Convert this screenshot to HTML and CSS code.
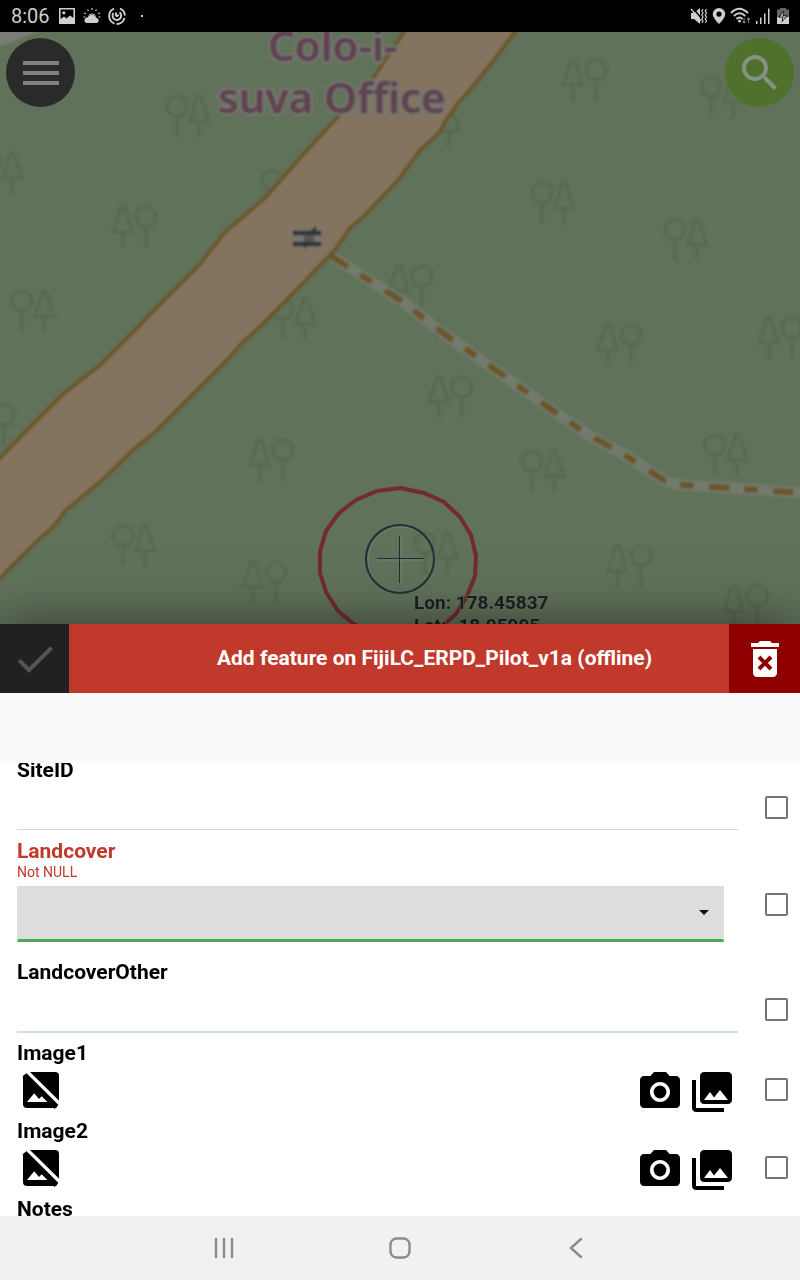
FILE: index.html
```html
<!DOCTYPE html>
<html lang="en">
<head>
<meta charset="utf-8">
<meta name="viewport" content="width=device-width, initial-scale=1">
<title>Add feature</title>
<link rel="stylesheet" href="styles.css">
</head>
<body>
<svg class="defs" aria-hidden="true">
  <symbol id="camera" viewBox="0 0 24 24">
    <circle cx="12" cy="12" r="3.2"/>
    <path d="M9 2L7.170 4H4c-1.100 0-2 .9-2 2v12c0 1.100.9 2 2 2h16c1.100 0 2-.9 2-2V6c0-1.100-.9-2-2-2h-3.170L15 2H9zm3 15c-2.760 0-5-2.240-5-5s2.240-5 5-5 5 2.240 5 5-2.240 5-5 5z"/>
  </symbol>
  <symbol id="library" viewBox="0 0 24 24">
    <path d="M22 16V4c0-1.100-.9-2-2-2H8c-1.100 0-2 .9-2 2v12c0 1.100.9 2 2 2h12c1.100 0 2-.9 2-2zm-11-4l2.030 2.710L16 11l4 5H8l3-4zM2 6v14c0 1.100.9 2 2 2h14v-2H4V6H2z"/>
  </symbol>
  <symbol id="no-image" viewBox="0 1 24 24">
    <path d="M5.500 3H19a2 2 0 0 1 2 2V19L19.500 21H5a2 2 0 0 1-2-2V5Z"/>
    <path fill="#fff" d="M5 18L8.600 13.600 11 16.500 12.600 14.900 15.500 18Z"/>
    <path stroke="#000" stroke-width="1.800" d="M3.400 4.900L19.400 20.900"/>
    <path stroke="#fff" stroke-width="1.700" d="M4.500 2.200L22.500 20"/>
  </symbol>
  <g id="tree-a" fill="none">
    <path d="M-13-19Q-11-22-9-19L-2 5H-21ZM-11 5V21"/>
    <circle cx="12" cy="-10" r="10"/><path d="M12 0V21"/>
  </g>
  <g id="tree-b" fill="none">
    <path d="M9-19Q11-22 13-19L21 5H2ZM11 5V21"/>
    <circle cx="-11" cy="-10" r="10"/><path d="M-11 0V21"/>
  </g>
</svg>
<div class="app">
  <header class="status">
    <time class="clock">8:06</time>
    <svg class="s-icon" viewBox="0 0 18 18" aria-hidden="true"><path fill-rule="evenodd" d="M1 1H17V17H1ZM2.600 2.600V12L6 9.500 8.500 11.500 12 8.500 15.400 11V2.600Z"/><circle cx="5.800" cy="5.800" r="1.600"/></svg>
    <svg class="s-icon" viewBox="0 0 18 18" aria-hidden="true"><path d="M4 16a2.700 2.700 0 0 1 .3-5.400A5 5 0 0 1 13.500 11 2.600 2.600 0 0 1 14 16Z"/><path d="M4.500 9A5 4.600 0 0 1 13.500 9Q12 7.800 9 7.500 6 7.800 4.500 9Z"/><path class="line" d="M9 1V3M4.500 2.500L5.500 4M13.500 2.500L12.500 4M1 6L3 6.800M17 6L15 6.800M.5 10H2.500M17.500 10H15.500"/></svg>
    <svg class="s-icon" viewBox="0 0 18 18" aria-hidden="true"><path class="line thick" d="M6 1.700A8 8 0 0 0 6.500 16.600M8.500 17A8 8 0 0 0 16.500 11M16.900 8.500A8 8 0 0 0 12 1.600M5.500 6A4.300 4.300 0 1 0 11.500 5.300M8 5.500V8.800A1.500 1.500 0 0 0 10.300 7.500"/></svg>
    <span class="dot"></span>
    <div class="status-right">
      <svg class="s-icon" viewBox="0 0 18 18" aria-hidden="true"><path d="M1 6H4L10 1V17L4 12H1Z"/><path stroke="#000" stroke-width="1.500" d="M2 0L12 12"/><path class="line" d="M1 2L11 14M13 2L11.800 4 13 6 11.800 8 13 10 11.800 12 13 14 11.800 16M16.500 2L15.200 4 16.500 6 15.200 8 16.500 10 15.200 12 16.500 14 15.200 16"/></svg>
      <svg class="s-icon" viewBox="0 0 18 18" aria-hidden="true"><path fill-rule="evenodd" d="M9 1A6.300 6.300 0 0 0 2.700 7C2.700 11 9 17 9 17S15.300 11 15.300 7A6.300 6.300 0 0 0 9 1ZM9 4.500A2.600 2.600 0 1 1 9 9.700 2.600 2.600 0 0 1 9 4.500Z"/></svg>
      <svg class="s-icon wide" viewBox="0 0 22 18" aria-hidden="true"><path class="line thick" d="M1 6Q9-2.500 18 6M3.800 9Q9.500 3.500 15.200 9M6.500 12Q9.500 9 12.500 12"/><circle cx="9.500" cy="14" r="1.500"/><path class="line faint" d="M14 11V16M12.500 14.500L14 16 15.500 14.500M18.500 16V11M17 12.500L18.500 11 20 12.500"/></svg>
      <svg class="s-icon" viewBox="0 0 18 18" aria-hidden="true"><path d="M2 14h1.500v3H2ZM6 10.500h1.500V17H6ZM10 6.500h1.500V17H10ZM14 1.500h1.500V17H14Z"/></svg>
      <svg class="s-icon" viewBox="0 0 18 18" aria-hidden="true"><path fill="#666" d="M6 1H12V2.500H15V10H3V2.500H6Z"/><path d="M3 10H15V17H3Z"/><path fill="#000" d="M10 3.500L4 10.500H8.500L7.500 15.500 14 8.500H9.500Z"/><path d="M9.500 5L5.800 9.700H9.500L8.600 13.500 12.300 9.200H8.600Z"/></svg>
    </div>
  </header>

  <main class="map">
    <svg class="map-canvas" viewBox="0 32 800 592" preserveAspectRatio="xMidYMin slice" role="img" aria-label="Map">
      <rect class="land" y="0" width="800" height="700"/>
      <g class="tile">
        <path fill="#7c7c76" d="M-5 25H52Q30 36-5 48Z"/>
        <g class="trees">
          <use href="#tree-a" x="584" y="80"/><use href="#tree-a" x="134" y="227"/><use href="#tree-a" x="410" y="286"/>
          <use href="#tree-a" x="271" y="460"/><use href="#tree-a" x="264" y="582"/><use href="#tree-a" x="619" y="345"/>
          <use href="#tree-a" x="780" y="338"/><use href="#tree-a" x="450" y="397"/><use href="#tree-a" x="629" y="566"/>
          <use href="#tree-a" x="745" y="606"/><use href="#tree-a" x="-8" y="425"/>
          <use href="#tree-b" x="188" y="116"/><use href="#tree-b" x="553" y="203"/><use href="#tree-b" x="686" y="240"/>
          <use href="#tree-b" x="722" y="97"/><use href="#tree-b" x="33" y="311"/><use href="#tree-b" x="294" y="319"/>
          <use href="#tree-b" x="543" y="471"/><use href="#tree-b" x="134" y="546"/><use href="#tree-b" x="726" y="455"/>
          <use href="#tree-b" x="436" y="553"/><use href="#tree-b" x="1" y="173"/><use href="#tree-b" x="283" y="190"/>
          <use href="#tree-b" x="438" y="126"/>
        </g>
        <path class="road" d="M-10 468L0 458 27 430 62 395 100 365 135 330 165 299 200 264 225 232 265 198 300 158 333 122 370 83 385 60 408 26H519L500 52 490 65 470 90 458 103 445 122 440 132 420 150 400 178 365 215 350 228 335 250 300 286 265 322 240 345 230 357 200 387 180 407 155 432 133 450 120 463 100 482 65 511 55 525 33 545 8 570-10 590Z"/>
        <path class="trail-case" d="M333 257L400 300 447 336 500 373 545 405 587 434 620 452 645 468 665 481 680 485 730 488 805 493"/>
        <path class="trail" d="M331 256L400 300 447 336 500 373 545 405 587 434 620 452 645 468 665 481 680 485 730 488 805 493"/>
        <rect fill="#77736f" x="293" y="228" width="29" height="20"/>
        <path fill="#555" d="M304 235H314V242H304Z"/>
        <path fill="#343436" d="M293 231H311L316 226V231H321V235H293ZM293 242H321V246H307L304 249V246H293Z"/>
        <g class="place"><text x="268" y="61">Colo-i-</text><text x="218" y="113">suva Office</text></g>
      </g>
      <path class="accuracy" d="M400 488L424 493 444 502 460 517 471 535 476 556 475 576 467 596 456 614 440 628 400 640 355 625 338 611 326 592 320 573 320 551 326 531 339 513 356 500 377 491Z"/>
      <g class="halo"><circle cx="401" cy="560" r="33"/><path d="M401 537V584M377 560H424"/></g>
      <g class="cross"><circle cx="400" cy="559" r="34"/><path d="M399.500 536V583M377 558.500H424"/></g>
      <g class="coords"><text x="414" y="609">Lon: 178.45837</text><text x="414" y="632">Lat: -18.05995</text></g>
    </svg>
    <div class="map-tools">
      <button class="round menu" type="button" aria-label="Menu">
        <svg class="icon" viewBox="0 0 24 24"><path d="M3 6h18v2H3ZM3 11h18v2H3ZM3 16h18v2H3Z"/></svg>
      </button>
      <button class="round search" type="button" aria-label="Search">
        <svg class="icon" viewBox="0 0 24 24"><path d="M15.500 14h-.79l-.28-.27A6.471 6.471 0 0 0 16 9.500 6.500 6.500 0 1 0 9.500 16c1.610 0 3.090-.59 4.230-1.570l.27.28v.79l5 4.990L20.490 19l-4.990-5zm-6 0C7.010 14 5 11.990 5 9.500S7.010 5 9.500 5 14 7.010 14 9.500 11.990 14 9.500 14z"/></svg>
      </button>
    </div>
  </main>

  <section class="sheet" aria-labelledby="sheet-title">
    <div class="sheet-bar">
      <button class="confirm" type="button" aria-label="Save"><svg class="icon" viewBox="0 0 24 24"><path d="M9 16.170L4.830 12l-1.420 1.410L9 19 21 7l-1.410-1.410z"/></svg></button>
      <h1 class="title" id="sheet-title">Add feature on FijiLC_ERPD_Pilot_v1a (offline)</h1>
      <button class="delete" type="button" aria-label="Delete"><svg class="icon" viewBox="0 0 24 24"><path d="M6 19c0 1.100.9 2 2 2h8c1.100 0 2-.9 2-2V7H6Z"/><path d="M15.500 4l-1-1h-5l-1 1H5v2h14V4z"/><path stroke="#8e0000" stroke-width="2" d="M9 11L15 17M15 11L9 17"/></svg></button>
    </div>
    <div class="tabs"></div>
    <form class="form">
      <div class="row">
        <div class="field"><label class="label" for="site">SiteID</label><input class="text" id="site" type="text"></div>
        <input class="remember" type="checkbox" aria-label="Remember SiteID">
      </div>
      <div class="row">
        <div class="field">
          <label class="label invalid" for="cover">Landcover</label>
          <span class="hint">Not NULL</span>
          <div class="combo">
            <select class="select" id="cover"><option></option></select>
            <svg class="arrow" viewBox="0 0 10 5" aria-hidden="true"><path d="M0 0H10L5 5Z"/></svg>
          </div>
        </div>
        <input class="remember raised" type="checkbox" aria-label="Remember Landcover">
      </div>
      <div class="row">
        <div class="field"><label class="label" for="other">LandcoverOther</label><input class="text strong" id="other" type="text"></div>
        <input class="remember" type="checkbox" aria-label="Remember LandcoverOther">
      </div>
      <div class="row">
        <div class="field"><span class="label">Image1</span>
          <div class="media">
            <svg class="icon" role="img" aria-label="No image"><use href="#no-image"/></svg>
            <button class="tool" type="button" aria-label="Take photo"><svg class="icon"><use href="#camera"/></svg></button>
            <button class="tool" type="button" aria-label="Pick from gallery"><svg class="icon"><use href="#library"/></svg></button>
          </div>
        </div>
        <input class="remember" type="checkbox" aria-label="Remember Image1">
      </div>
      <div class="row">
        <div class="field"><span class="label">Image2</span>
          <div class="media">
            <svg class="icon" role="img" aria-label="No image"><use href="#no-image"/></svg>
            <button class="tool" type="button" aria-label="Take photo"><svg class="icon"><use href="#camera"/></svg></button>
            <button class="tool" type="button" aria-label="Pick from gallery"><svg class="icon"><use href="#library"/></svg></button>
          </div>
        </div>
        <input class="remember" type="checkbox" aria-label="Remember Image2">
      </div>
      <div class="row">
        <div class="field"><label class="label" for="notes">Notes</label><input class="text" id="notes" type="text"></div>
        <input class="remember" type="checkbox" aria-label="Remember Notes">
      </div>
    </form>
  </section>

  <nav class="nav">
    <button type="button" aria-label="Recents"><svg viewBox="0 0 24 24"><path d="M4 3V21M12 3V21M20 3V21"/></svg></button>
    <button type="button" aria-label="Home"><svg viewBox="0 0 24 24"><rect x="2.500" y="2.500" width="19" height="19" rx="6"/></svg></button>
    <button type="button" aria-label="Back"><svg viewBox="0 0 24 24"><path d="M17 3L7 12 17 21"/></svg></button>
  </nav>
</div>
</body>
</html>
```
FILE: styles.css
```css
* { box-sizing: border-box; }
body { margin: 0; font-family: Roboto, "Liberation Sans", sans-serif; color: #000; background: #fff; }
button { margin: 0; padding: 0; border: 0; background: none; color: inherit; display: flex; align-items: center; justify-content: center; }
.defs { position: absolute; width: 0; height: 0; }
.app { display: flex; flex-direction: column; height: 100vh; }
.icon { width: 48px; height: 48px; display: block; fill: currentColor; }

.status { display: flex; align-items: center; height: 32px; padding: 0 8px 0 11px; background: #000; color: #cfcfcf; flex: none; }
.clock { font-size: 20px; line-height: 32px; margin-right: 8px; }
.s-icon { width: 18px; height: 18px; fill: currentColor; margin-right: 7px; flex: none; }
.s-icon.wide { width: 22px; }
.s-icon .line { fill: none; stroke: currentColor; stroke-width: 1.2; }
.s-icon .thick { stroke-width: 1.9; }
.s-icon .faint { stroke: #777; }
.dot { width: 2px; height: 2px; margin-left: 8px; background: currentColor; }
.status-right { display: flex; align-items: center; gap: 2px; margin-left: auto; }
.status-right .s-icon { margin-right: 0; }

.map { position: relative; flex: 1 1 0; min-height: 0; overflow: hidden; background: #61725b; }
.map-canvas { display: block; width: 100%; height: 100%; }
.land { fill: #61725b; }
.tile { filter: blur(1px); }
.trees { stroke: #596950; stroke-width: 3; }
.road { fill: #84745f; stroke: #6b572e; stroke-width: 4; stroke-linejoin: round; }
.trail-case { fill: none; stroke: #727b6d; stroke-width: 11; }
.trail { fill: none; stroke: #6b562c; stroke-width: 6; stroke-dasharray: 20 15 13 16; }
.place { font-family: "Noto Sans", sans-serif; font-size: 42px; font-weight: 600; fill: #5f4150; stroke: #74766d; stroke-width: 5; paint-order: stroke; stroke-linejoin: round; }
.accuracy { fill: none; stroke: #742b2c; stroke-width: 4; }
.halo { fill: none; stroke: #777d7a; stroke-width: 1; }
.cross { fill: none; stroke: #262c33; stroke-width: 2; }
.cross path { stroke-width: 1; }
.coords { font-size: 19px; font-weight: 700; fill: #1d1f20; stroke: #6c7a68; stroke-width: 1; paint-order: stroke; }
.map-tools { position: absolute; top: 6px; left: 6px; right: 6px; display: flex; justify-content: space-between; }
.round { width: 69px; height: 69px; border-radius: 50%; }
.menu { background: #2a2a2a; color: #808080; }
.search { background: #50712b; color: #879186; }

.sheet { position: relative; flex: 1 1 0; min-height: 0; display: flex; flex-direction: column; box-shadow: 0 0 50px rgba(0, 0, 0, .5); background: #fff; }
.sheet-bar { display: flex; height: 69px; flex: none; background: #c0392b; color: #fff; }
.confirm { width: 69px; background: #212121; color: #555; }
.delete { width: 71px; background: #8e0000; color: #fff; }
.title { flex: 1; margin: 0; padding-left: 71px; font-size: 21px; font-weight: 700; line-height: 69px; text-align: center; white-space: nowrap; }
.tabs { height: 70px; flex: none; background: #fafafa; }
.form { flex: 1; min-height: 0; overflow: hidden; }
.row { display: flex; align-items: center; padding-left: 17px; padding-right: 12px; gap: 27px; }
.row:first-child { margin-top: -5px; }
.field { flex: 1; min-width: 0; display: flex; flex-direction: column; }
.label { font-size: 21px; font-weight: 700; line-height: 24px; }
.invalid { color: #c0392b; }
.hint { font-size: 14px; line-height: 18px; color: #c0392b; }
.text { width: 100%; height: 48px; margin-bottom: 9px; padding: 8px 0; border: 0; border-bottom: 1px solid #c8dccb; background: none; font: inherit; font-size: 20px; outline: 0; }
.text.strong { height: 49px; margin-bottom: 8px; border-bottom: 2px solid #cde2cf; }
.combo { position: relative; margin: 5px 14px 18px 0; }
.select { appearance: none; display: block; width: 100%; height: 56px; border: 1px solid #d2e2d3; border-bottom: 3px solid #4caa52; border-radius: 0; background: #ddd; font-size: 20px; }
.arrow { position: absolute; right: 15px; top: 24px; width: 10px; height: 5px; fill: #111; }
.media { display: flex; gap: 4px; padding: 3px 2px 3px 0; }
.media > .icon { margin-right: auto; }
.remember { appearance: none; flex: none; width: 23px; height: 23px; margin: 18px 0 0; border: 2px solid #757575; border-radius: 2px; background: #fff; }
.remember.raised { margin-top: 10px; }

.nav { display: flex; justify-content: center; height: 64px; flex: none; background: #f1f1f1; position: relative; }
.nav button { flex: 0 1 176px; }
.nav svg { width: 24px; height: 24px; fill: none; stroke: #8a8a8a; stroke-width: 2.4; stroke-linecap: round; }
```
